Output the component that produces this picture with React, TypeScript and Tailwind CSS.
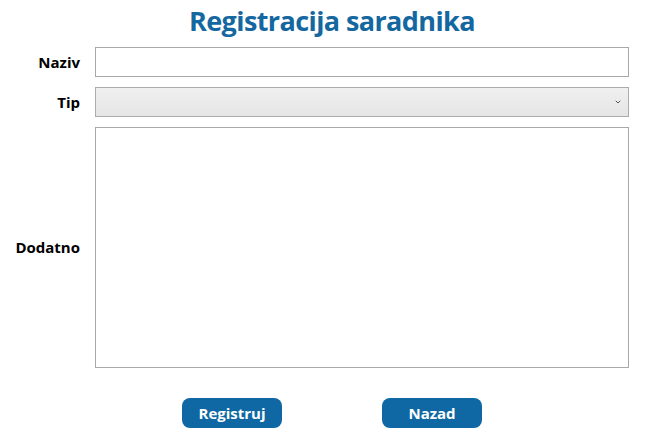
import React from 'react';
import { ChevronDown } from 'lucide-react';

const labelCls = 'w-[80px] shrink-0 text-right text-[15px] font-bold text-black';

export default function App() {
  return (
    <div className="w-[664px] h-[441px] bg-white" style={{ fontFamily: '"Open Sans", "Noto Sans", sans-serif' }}>
      <h1 className="pt-[3px] text-center text-[27px] font-bold leading-[36px] text-[#14679f] tracking-[-0.6px]">
        Registracija saradnika
      </h1>

      <div className="mt-[8px] flex flex-col gap-[10px]">
        {/* Naziv */}
        <div className="flex items-center gap-[15px]">
          <label className={labelCls}>Naziv</label>
          <input className="h-[30px] w-[534px] border border-[#a9a9a9] bg-white px-1 outline-none" />
        </div>

        {/* Tip */}
        <div className="flex items-center gap-[15px]">
          <label className={labelCls}>Tip</label>
          <div className="relative h-[30px] w-[534px] border border-[#acacac] bg-gradient-to-b from-[#f0f0f0] to-[#e5e5e5]">
            <ChevronDown className="absolute right-[6px] top-[10px] h-[8px] w-[8px] text-[#555]" strokeWidth={3} />
          </div>
        </div>

        {/* Dodatno */}
        <div className="flex items-center gap-[15px]">
          <label className={labelCls}>Dodatno</label>
          <textarea className="h-[241px] w-[534px] resize-none border border-[#a9a9a9] bg-white p-1 outline-none" />
        </div>
      </div>

      <div className="mt-[30px] flex gap-[100px] pl-[182px]">
        <button className="h-[30px] w-[100px] rounded-[8px] bg-[#0f68a3] text-[15px] font-bold text-white">
          Registruj
        </button>
        <button className="h-[30px] w-[100px] rounded-[8px] bg-[#0f68a3] text-[15px] font-bold text-white">
          Nazad
        </button>
      </div>
    </div>
  );
}
